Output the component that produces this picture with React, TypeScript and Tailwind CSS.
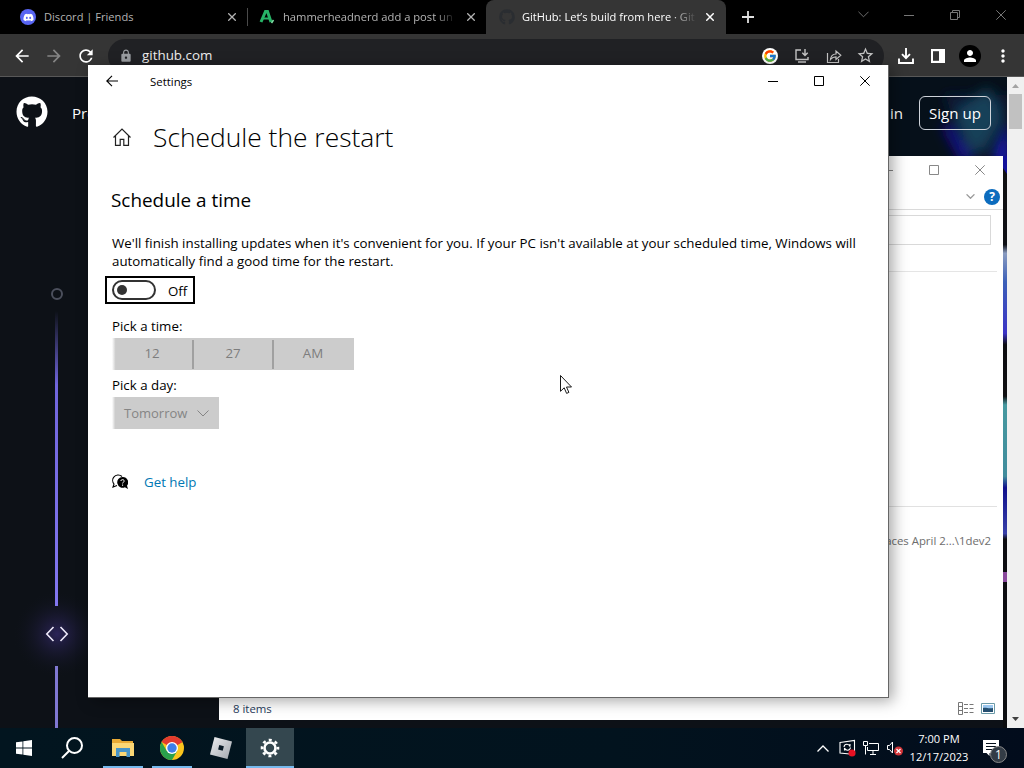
import { type ReactNode } from "react";
import { FaDiscord, FaGithub } from "react-icons/fa6";
import { FcGoogle } from "react-icons/fc";
import {
  MdArrowBack,
  MdArrowForward,
  MdLock,
  MdMoreVert,
  MdPerson,
  MdRefresh,
  MdStarBorder,
} from "react-icons/md";

interface IconProps {
  className?: string;
}

function CloseIcon({ className }: IconProps) {
  return (
    <svg viewBox="0 0 10 10" className={className} fill="none" stroke="currentColor">
      <path d="M0.3 0.3 9.7 9.7M9.7 0.3 0.3 9.7" />
    </svg>
  );
}

function MinimizeIcon({ className }: IconProps) {
  return (
    <svg viewBox="0 0 10 10" className={className} fill="none" stroke="currentColor">
      <path d="M0 5.5h10" />
    </svg>
  );
}

function MaximizeIcon({ className }: IconProps) {
  return (
    <svg viewBox="0 0 10 10" className={className} fill="none" stroke="currentColor">
      <path d="M0.5 0.5h9v9h-9z" />
    </svg>
  );
}

function ChevronIcon({ className }: IconProps) {
  return (
    <svg viewBox="0 0 12 7" className={className} fill="none" stroke="currentColor">
      <path d="M0.5 0.5 6 6l5.5-5.5" />
    </svg>
  );
}

function WindowButton({ children }: { children: ReactNode }) {
  return <div className="flex h-full w-[46px] items-center justify-center">{children}</div>;
}

function TabStrip() {
  return (
    <div className="flex h-[34px] bg-black text-[11.1px] text-[#b4b4b4]">
      <div className="flex w-[247px] items-center pl-5 pr-[11px]">
        <div className="flex size-4 items-center justify-center rounded-full bg-[#5865f2]">
          <FaDiscord className="size-[11px] text-white" />
        </div>
        <span className="ml-2 whitespace-nowrap">Discord | Friends</span>
        <CloseIcon className="ml-auto size-2 stroke-[1.6]" />
      </div>
      <div className="my-2 w-px bg-[#4a4a4a]" />
      <div className="flex w-[238px] items-center pl-[11px] pr-[11px]">
        <svg viewBox="0 0 16 16" className="size-4" fill="none">
          <path d="M2 13 6.5 2.5h2L12 13" stroke="#27b467" strokeWidth="3" />
          <path d="M4 9.5h7" stroke="#27b467" strokeWidth="2" />
          <path d="m12.5 14 2-3" stroke="#7ee0a4" strokeWidth="1.5" />
        </svg>
        <span className="ml-2 w-[173px] whitespace-nowrap text-[11.2px] [mask-image:linear-gradient(to_right,black_88%,transparent)]">
          hammerheadnerd add a post un
        </span>
        <CloseIcon className="ml-auto size-2 stroke-[1.6]" />
      </div>
      <div className="flex w-[240px] items-center rounded-t-lg bg-[#353535] pl-[13px] pr-[12px] text-white">
        <FaGithub className="size-4 text-[#2a2d31]" />
        <span className="ml-[7px] w-[175px] whitespace-nowrap [mask-image:linear-gradient(to_right,black_84%,transparent)]">
          GitHub: Let’s build from here · Git
        </span>
        <CloseIcon className="ml-auto size-2 stroke-[1.8]" />
      </div>
      <svg viewBox="0 0 12 12" className="ml-4 size-3 self-center" stroke="#e0e0e0" strokeWidth="1.8">
        <path d="M6 0v12M0 6h12" />
      </svg>
      <div className="ml-auto flex h-[29px] text-[#777]">
        <WindowButton>
          <ChevronIcon className="h-[7px] w-[11px]" />
        </WindowButton>
        <WindowButton>
          <MinimizeIcon className="size-[10px]" />
        </WindowButton>
        <WindowButton>
          <svg viewBox="0 0 10 10" className="size-[10px]" fill="none" stroke="currentColor">
            <path d="M0.5 2.5h7v7h-7zM2.5 2.5v-2h7v7h-2" />
          </svg>
        </WindowButton>
        <WindowButton>
          <CloseIcon className="size-[10px]" />
        </WindowButton>
      </div>
    </div>
  );
}

function Toolbar() {
  return (
    <div className="flex h-[43px] items-center border-b border-[#585858] bg-[#353535] pl-3 pr-[11px] pt-px">
      <MdArrowBack className="size-5 text-white" />
      <MdArrowForward className="ml-3 size-5 text-[#858585]" />
      <MdRefresh className="ml-3 size-5 text-white" />
      <div className="ml-3 flex h-[34px] w-[776px] items-center rounded-full bg-[#202124] pl-[11px] pr-[9px] text-[#c4c4c4]">
        <MdLock className="size-[14px] text-[#9a9da1]" />
        <span className="ml-[9px] text-[13.4px] text-[#eee]">github.com</span>
        <div className="ml-auto flex size-4 items-center justify-center rounded-full bg-white">
          <FcGoogle className="size-[14px]" />
        </div>
        <svg viewBox="0 0 16 16" className="ml-4 size-4" fill="none" stroke="currentColor" strokeWidth="1.4">
          <path d="M7 2H2v9.5h12V9M11 1v6M8.3 4.8 11 7.5l2.7-2.7M4 14h8" />
        </svg>
        <svg viewBox="0 0 16 16" className="ml-4 size-4" fill="none" stroke="currentColor" strokeWidth="1.2">
          <path d="M1.5 5v9.5h11V11M4.5 11.5C5 7.5 7 6 10 6V3l4.8 4.3L10 11.5V8.8c-2.5 0-4 .7-5.5 2.7z" />
        </svg>
        <MdStarBorder className="ml-[14px] size-[19px]" />
      </div>
      <svg viewBox="0 0 16 16" className="ml-[14px] size-4" fill="none" stroke="white" strokeWidth="1.9">
        <path d="M8 0v10M4 6.2l4 4 4-4M1 10.5V15h14v-4.5" />
      </svg>
      <svg viewBox="0 0 14 14" className="ml-[17px] size-[14px]">
        <path d="M0 0h14v14H0z" fill="white" />
        <path d="M2 2.2h6v9.6H2z" fill="#353535" />
      </svg>
      <div className="ml-[14px] flex size-[22px] items-center justify-center rounded-full bg-black">
        <MdPerson className="size-[18px] text-white" />
      </div>
      <MdMoreVert className="ml-3 size-5 shrink-0 text-white" />
    </div>
  );
}

function GithubPage() {
  return (
    <div className="flex h-[651px]">
      <div className="relative flex w-[1007px] flex-col overflow-hidden bg-[#0d1117]">
        {/* hero artwork behind the header */}
        <svg viewBox="0 0 1007 651" className="absolute inset-0 h-full w-full">
          <defs>
            <filter id="soft" x="-50%" y="-50%" width="200%" height="200%">
              <feGaussianBlur stdDeviation="6" />
            </filter>
            <radialGradient id="codeGlow">
              <stop offset="0" stopColor="#2b2458" />
              <stop offset="1" stopColor="#0d1117" stopOpacity="0" />
            </radialGradient>
            <linearGradient id="edge" x1="0" y1="0" x2="0" y2="1">
              <stop offset="0" stopColor="#111" />
              <stop offset="0.155" stopColor="#0e1015" />
              <stop offset="0.17" stopColor="#8a9cc0" />
              <stop offset="0.22" stopColor="#3c60b8" />
              <stop offset="0.31" stopColor="#3b33c5" />
              <stop offset="0.33" stopColor="#0c0c10" />
              <stop offset="0.42" stopColor="#101012" />
              <stop offset="0.435" stopColor="#4799a0" />
              <stop offset="0.56" stopColor="#408c9c" />
              <stop offset="0.58" stopColor="#10108c" />
              <stop offset="0.66" stopColor="#3840a8" />
              <stop offset="0.67" stopColor="#0c0c10" />
              <stop offset="1" stopColor="#0c0d10" />
            </linearGradient>
          </defs>
          <path d="M888 0h119v80H888z" fill="#06101a" />
          <g filter="url(#soft)">
            <path d="M944 18h63v62h-36z" fill="#0e1d3a" />
            <path d="M954 38 988 10l14 30-18 30-14 4z" fill="#163f58" />
            <path d="M942 50 950 46 974 84h-14z" fill="#12108a" />
            <path d="M1009 46v42h-14z" fill="#1a12c0" />
          </g>
          <path d="M1003 79h4v572h-4z" fill="url(#edge)" />
          <path d="M1003 79h4v18l-4-6z" fill="#12109a" />
          <path d="M1003 495h4v10h-4z" fill="#8a4a9c" />
          <circle cx="57" cy="557" r="44" fill="url(#codeGlow)" />
        </svg>
        <div className="relative flex h-[72px] shrink-0 items-center pl-4 pr-4 text-[15.1px] text-white">
          <FaGithub className="-mt-[2px] size-8" />
          <span className="ml-6 pt-px">Product</span>
          <span className="ml-auto pt-px">Sign in</span>
          <span className="ml-4 flex h-[34px] w-[72px] items-center justify-center rounded-md border border-[#cfd3da] pt-px">
            Sign up
          </span>
        </div>
        <div className="relative flex w-[113px] shrink-0 flex-col items-center">
          <div className="ml-px mt-[139px] size-3 rounded-full border-2 border-[#4b4f5c]" />
          <div className="mt-[11px] h-[295px] w-[3px] bg-linear-to-b from-transparent via-[#7065dc] via-25% to-[#8377f0]" />
          <svg viewBox="0 0 24 16" className="mb-6 ml-px mt-5 h-4 w-6" fill="none" stroke="#eeeafa" strokeWidth="1.6">
            <path d="M8.5 1 1.8 8l6.7 7M15.5 1l6.7 7-6.7 7" />
          </svg>
          <div className="h-[62px] w-[3px] bg-[#8078d2]" />
        </div>
      </div>
      <div className="flex w-[17px] flex-col items-center bg-[#f0f0f0]">
        <svg viewBox="0 0 17 17" className="size-[17px]">
          <path d="m5 11 3.5-4 3.5 4z" fill="#a3a3a3" />
        </svg>
        <div className="h-[35px] w-[13px] bg-[#c1c1c1]" />
        <svg viewBox="0 0 17 17" className="mt-auto size-[17px]">
          <path d="m5 6 3.5 4L12 6z" fill="#404040" />
        </svg>
      </div>
    </div>
  );
}

function ExplorerWindow() {
  return (
    <div className="absolute left-[219px] top-[156px] flex h-[564px] w-[784px] flex-col bg-white">
      <div className="flex h-[28px] justify-end text-[#888]">
        <WindowButton>
          <MinimizeIcon className="size-[10px]" />
        </WindowButton>
        <WindowButton>
          <MaximizeIcon className="size-[10px]" />
        </WindowButton>
        <WindowButton>
          <CloseIcon className="size-[10px]" />
        </WindowButton>
      </div>
      <div className="flex h-[26px] items-center justify-end border-b border-[#dadada] pr-[3px]">
        <ChevronIcon className="h-[5px] w-[9px] stroke-[1.8] text-[#999]" />
        <div className="ml-[9px] flex size-4 items-center justify-center rounded-full bg-[#0c6cbe] text-[12px] font-bold text-white">
          ?
        </div>
      </div>
      <div className="ml-3 mr-3 mt-[5px] h-[30px] border border-[#d9d9d9]" />
      <div className="mr-[6px] mt-[26px] border-t border-[#e5e5e5]" />
      <div className="mr-[6px] mt-[234px] border-t border-[#e1e1e1]" />
      <div className="mt-[25px] pr-3 text-right text-[11.4px] leading-[18px] text-[#6d6d6d]">
        Places April 2...\1dev2
      </div>
      <div className="mt-auto flex h-6 items-center pl-[14px] pr-2">
        <span className="pt-[2px] text-[11.4px] text-[#1e395b]">8 items</span>
        <svg viewBox="0 0 16 13" className="ml-auto h-[13px] w-4" fill="none" stroke="#777">
          <path d="M0.5 0.5h4v12h-4zM0.5 4.5h4M0.5 8.5h4" />
          <path d="M6 2.5h10M6 6.5h10M6 10.5h10" strokeDasharray="4 1.5" />
        </svg>
        <svg viewBox="0 0 14 11" className="ml-[7px] h-[11px] w-[14px]">
          <path d="M0.5 0.5h13v10h-13z" fill="#fff" stroke="#6b9aa8" />
          <path d="M2 2h10v7H2z" fill="#9cc8f0" />
          <path d="M2 5c3-1 5 1 10 0v4H2z" fill="#254f70" />
        </svg>
      </div>
    </div>
  );
}

function SettingsWindow() {
  return (
    <div className="absolute left-[88px] top-[65px] flex h-[633px] w-[801px] flex-col border-b border-r border-[#666] bg-white text-black shadow-[4px_3px_14px_rgba(0,0,0,0.35)]">
      <div className="flex h-8 items-center pl-[18px]">
        <svg viewBox="0 0 12 12" className="size-3" fill="none" stroke="currentColor" strokeWidth="1.1">
          <path d="M12 6H0.8M6 0.8 0.8 6 6 11.2" />
        </svg>
        <span className="ml-8 pt-[2px] text-[11.4px]">Settings</span>
        <div className="ml-auto flex h-full">
          <WindowButton>
            <MinimizeIcon className="size-[10px]" />
          </WindowButton>
          <WindowButton>
            <MaximizeIcon className="size-[10px]" />
          </WindowButton>
          <WindowButton>
            <CloseIcon className="size-[10px]" />
          </WindowButton>
        </div>
      </div>
      <div className="flex flex-col items-start pl-6 text-[13.3px] leading-[18px]">
        <div className="mt-[19px] flex h-[42px] items-center">
          <svg viewBox="0 0 20 20" className="size-5" fill="none" stroke="#222" strokeWidth="1.2">
            <path d="M1.5 10.5 10 2l8.5 8.5M3.5 9v9.4h4.7v-6h3.6v6h4.7V9" />
          </svg>
          <h1 className="ml-[21px] text-[26.4px] font-[340] leading-9">Schedule the restart</h1>
        </div>
        <h2 className="-ml-px mt-[29px] text-[18.9px] leading-[26px]">Schedule a time</h2>
        <p className="mt-[21px] whitespace-nowrap">
          We'll finish installing updates when it's convenient for you. If your PC isn't available at your scheduled time, Windows will
          <br />
          automatically find a good time for the restart.
        </p>
        <div className="-ml-[7px] mt-[6px] flex h-7 w-[90px] items-center border-2 border-black pl-[5px]">
          <div className="flex h-5 w-11 items-center rounded-full border-2 border-[#333] pl-[3px]">
            <div className="size-[10px] rounded-full bg-[#333]" />
          </div>
          <span className="ml-3 pt-px">Off</span>
        </div>
        <div className="mt-[13px]">Pick a time:</div>
        <div className="mt-[3px] flex h-8 w-[242px] items-center bg-linear-to-r from-white via-[#ccc] via-[1.5%] to-[#ccc] text-center text-[#7d7d7d]">
          <span className="w-[80px] pb-[2px]">12</span>
          <div className="h-[29px] w-[2px] bg-[#a0a0a0]" />
          <span className="w-[78px] pb-[2px]">27</span>
          <div className="h-[29px] w-[2px] bg-[#a0a0a0]" />
          <span className="w-[78px] pb-[2px]">AM</span>
        </div>
        <div className="mt-[6px]">Pick a day:</div>
        <div className="mt-[3px] flex h-8 w-[107px] items-center bg-linear-to-r from-white via-[#ccc] via-[3%] to-[#ccc] pl-3 text-[13px] text-[#858585]">
          Tomorrow
          <ChevronIcon className="ml-auto mr-[10px] h-[7px] w-3" />
        </div>
        <div className="mt-[44px] flex items-center">
          <svg viewBox="0 0 16 16" className="size-4">
            <path
              d="M5 11.5 1 13l1-3C.3 8 .3 5 1.8 3.2 3.7.7 7.500.2 10 2.5"
              fill="none"
              stroke="black"
              strokeWidth="1.1"
            />
            <path d="M10.5 3a5.400 5.400 0 1 0 2.400 10.300L16 15l-1-3.200A5.400 5.400 0 0 0 10.500 3z" fill="black" />
            <path d="M8.8 7c.2-2 3.7-1.7 3.400.2-.2 1-1.6 1.1-1.6 2.3M10.600 10.500v1.300" fill="none" stroke="white" />
          </svg>
          <span className="ml-4 text-[#0078b4]">Get help</span>
        </div>
      </div>
    </div>
  );
}

function Taskbar() {
  return (
    <div className="flex h-10 items-center bg-linear-to-r from-[#02151f] via-[#02131e] via-60% to-[#020c1c] text-white">
      <div className="flex w-12 justify-center">
        <svg viewBox="0 0 16 16" className="size-4" fill="white">
          <path d="M0 2.3 6.5 1.4v6.2H0zM7.3 1.3 16 0v7.6H7.3zM0 8.4h6.5v6.2L0 13.7zM7.3 8.4H16V16l-8.700-1.300z" />
        </svg>
      </div>
      <div className="flex w-12 justify-center">
        <svg viewBox="0 0 22 22" className="size-[22px]" fill="none" stroke="white" strokeWidth="2">
          <circle cx="13.5" cy="8.5" r="7.5" />
          <path d="m8 14-7 7" />
        </svg>
      </div>
      <div className="ml-[7px] flex h-10 w-10 items-center justify-center border-b-2 border-[#76b9ed] pt-[2px]">
        <svg viewBox="0 0 22 18" className="h-[18px] w-[22px]">
          <path d="M0 0h8l2 2h11v15H0z" fill="#e8aa35" />
          <path d="M0 4h22v13H0z" fill="#fbd775" />
          <path d="M4 9h14v9h-3.500v-5h-7v5H4z" fill="#4794c8" />
        </svg>
      </div>
      <div className="ml-[9px] flex h-10 w-10 items-center justify-center border-b-2 border-[#76b9ed] pt-[2px]">
        <svg viewBox="0 0 24 24" className="size-6">
          <circle cx="12" cy="12" r="12" fill="#fbc51d" />
          <path d="M1.6 6A12 12 0 0 1 22.4 6L12 12z" fill="#e33b2e" />
          <path d="M22.4 6H12v6z" fill="#e33b2e" />
          <path d="M1.6 6A12 12 0 0 0 12 24l5.2-9L12 12 6.8 15z" fill="#2aa14c" />
          <circle cx="12" cy="12" r="6" fill="white" />
          <circle cx="12" cy="12" r="4.7" fill="#3f7fe8" />
        </svg>
      </div>
      <div className="ml-[5px] flex w-12 justify-center">
        <svg viewBox="0 0 22 22" className="size-[22px]">
          <defs>
            <linearGradient id="tile" x1="0" y1="0" x2="1" y2="1">
              <stop offset="0" stopColor="#f0f0f2" />
              <stop offset="1" stopColor="#a0a5ac" />
            </linearGradient>
          </defs>
          <path d="m4.5 0 17.5 4.5L17.5 22 0 17.5z" fill="url(#tile)" />
          <path d="m9.3 8 4.6 1.2-1.2 4.6-4.6-1.2z" fill="#0a1a26" />
        </svg>
      </div>
      <div className="ml-px flex h-10 w-12 items-center justify-center border-b-2 border-[#76b9ed] bg-[#34474f] pt-[2px]">
        <svg viewBox="0 0 20 20" className="size-5" fill="none" stroke="white">
          <circle cx="10" cy="10" r="5.5" strokeWidth="2.6" />
          <circle cx="10" cy="10" r="8" strokeWidth="2.6" strokeDasharray="3 3.283" strokeDashoffset="1.5" />
        </svg>
      </div>
      <div className="ml-auto flex items-center">
        <svg viewBox="0 0 12 7" className="h-[7px] w-3" fill="none" stroke="white" strokeWidth="1.3">
          <path d="M0.5 6.5 6 1l5.5 5.5" />
        </svg>
        <svg viewBox="0 0 18 18" className="ml-[10px] size-[18px]" fill="none" stroke="white" strokeWidth="1.1">
          <path d="M1 3.5 15.5 1.5v14L1 14z" />
          <path d="M5 8c.5-3.5 5-3.5 6-.5V5M11.5 8.5c-.5 3.5-5 3.5-6 .5v2.5" />
          <circle cx="13" cy="14" r="3.5" fill="#e81123" stroke="none" />
        </svg>
        <svg viewBox="0 0 16 14" className="ml-[6px] h-[14px] w-4" fill="none" stroke="white">
          <path d="M6 2.5h9.5v7H4.5V6M10 9.5v4M7 13.5h6M0.5 0.5h4v4h-4zM2.5 4.5v9" />
        </svg>
        <svg viewBox="0 0 16 16" className="ml-2 size-4" fill="none">
          <path d="M0.5 5.5h2l3-3.5v11l-3-3.5h-2z" stroke="white" />
          <circle cx="11.5" cy="11" r="4.5" fill="#d13438" />
          <path d="m9.5 9 4 4m0-4-4 4" stroke="white" strokeWidth="1.2" />
        </svg>
        <div className="ml-[6px] flex w-[60px] flex-col items-center text-[11.1px] leading-[18px]">
          <div className="whitespace-nowrap">7:00 PM</div>
          <div className="whitespace-nowrap">12/17/2023</div>
        </div>
        <div className="relative ml-[14px] mr-[25px]">
          <svg viewBox="0 0 16 16" className="size-4">
            <path d="M0 0h16v13H6.5v3l-3-3H0z" fill="white" />
            <path d="M3 3.5h10M3 6.5h10M3 9.5h7" stroke="#05101c" />
          </svg>
          <span className="absolute -right-[8px] top-[6px] flex size-[17px] items-center justify-center rounded-full border border-[#888] bg-[#333c46] text-[12px]">
            1
          </span>
        </div>
      </div>
    </div>
  );
}

export default function App() {
  return (
    <div className="relative h-[768px] w-[1024px] overflow-hidden bg-[#0d1117] font-['Open_Sans','Noto_Sans',sans-serif]">
      <TabStrip />
      <Toolbar />
      <GithubPage />
      <Taskbar />
      <ExplorerWindow />
      <SettingsWindow />
      <svg viewBox="0 0 12 19" className="absolute left-[560px] top-[375px] h-[19px] w-3">
        <path
          d="M0.5 0.5v15.8l3.7-3.5 2.4 5.6 2.3-1-2.400-5.400h5z"
          fill="white"
          stroke="black"
          strokeWidth="0.9"
        />
      </svg>
    </div>
  );
}
